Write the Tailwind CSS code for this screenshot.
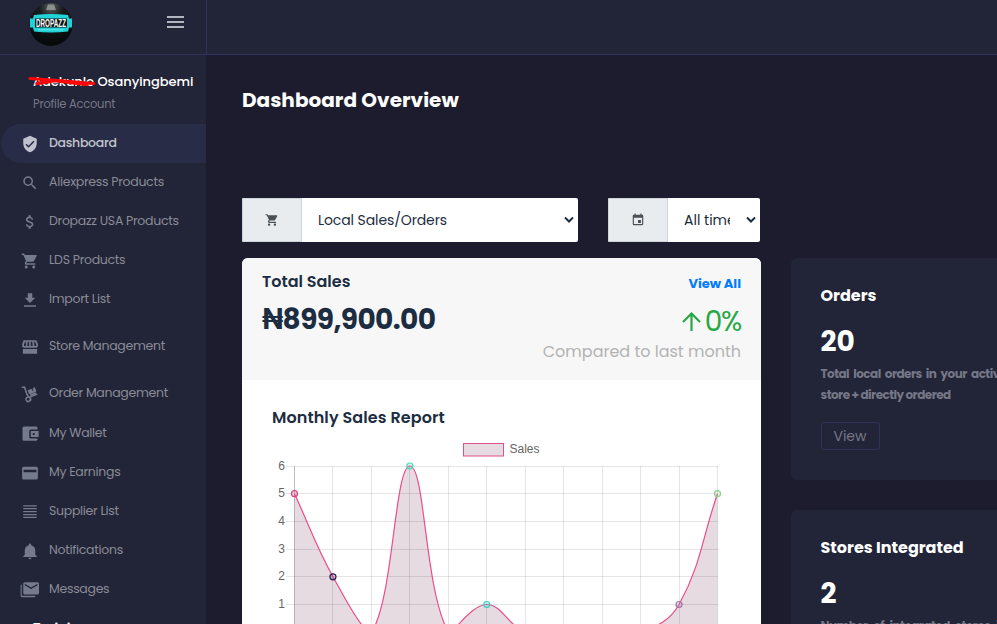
<!DOCTYPE html>
<html lang="en">
<head>
  <meta charset="UTF-8">
  <meta name="viewport" content="width=device-width, initial-scale=1.0">
  <title>Dropazz - Dashboard</title>
  <script src="https://cdn.jsdelivr.net/npm/@tailwindcss/browser@4"></script>
</head>
<body class="bg-[#1c1c2e] font-['Poppins','Inter',sans-serif] text-[#1c2d41] w-[997px] h-[624px] overflow-hidden flex flex-col">
  <header class="h-[55px] shrink-0 bg-[#222437] border-b border-[#30325a] flex">
    <div class="w-[207px] border-r border-[#30325a] flex items-start justify-between pl-[29px] pr-[22px]">
      <svg class="w-11 h-12" viewBox="0 0 44 48">
        <defs>
          <radialGradient id="ball" cx="50%" cy="10%" r="90%">
            <stop offset="0" stop-color="#5a6260"/>
            <stop offset="0.3" stop-color="#171c1c"/>
            <stop offset="1" stop-color="#050808"/>
          </radialGradient>
        </defs>
        <circle cx="22" cy="24.5" r="21.5" fill="url(#ball)"/>
        <path d="M19 4.500h6l2 5.500h-10z" fill="#8a8f8f"/>
        <path d="M5 15q17-2 34 0l1 3.500h3v9h-3l-1 4q-17 2-34 0l-1-4H1v-9h3z" fill="#21d3d6"/>
        <path d="M6 18.500h32v9H6z" fill="#0a0f10"/>
        <path d="M9 29.800h26" stroke="#8ff0f0" stroke-width="0.800" stroke-dasharray="2 0.600"/>
        <text x="22" y="26.500" text-anchor="middle" textLength="30" lengthAdjust="spacingAndGlyphs" font-family="Liberation Sans" font-weight="700" font-size="10" fill="#fff">DROPAZZ</text>
      </svg>
      <svg class="w-[17px] h-3 mt-4" viewBox="0 0 17 12" fill="#b3b5bf"><path d="M0 0h17v2H0zM0 5h17v2H0zM0 10h17v2H0z"/></svg>
    </div>
  </header>

  <div class="flex flex-1 min-h-0">
    <aside class="w-[206px] shrink-0 bg-[#222437] overflow-hidden">
      <div class="relative h-[69px] pl-[33px] pt-[17px]">
        <p class="text-[13px] leading-5 font-medium text-white whitespace-nowrap tracking-[-0.04px]">Adekunle Osanyingbemi</p>
        <p class="text-[11.5px] leading-4 mt-1 text-[#757786] tracking-[-0.25px]">Profile Account</p>
        <svg class="absolute left-[28px] top-[20px] w-[72px] h-3" viewBox="0 0 72 12" fill="none" stroke="#ff0505" stroke-linecap="round"><path d="M2 3.500l14 1 50 4" stroke-width="3"/><path d="M9 8.500l18-3 32 4" stroke-width="3.500"/></svg>
      </div>
      <nav id="menu"></nav>
      <p class="pl-[33px] pt-[9px] text-[13px] leading-5 font-semibold text-white">Training</p>
    </aside>

    <main class="flex-1 min-w-0 pl-9 pt-[33px] overflow-hidden">
      <h1 class="text-xl leading-6 font-bold text-white tracking-[0.03px]">Dashboard Overview</h1>

      <div class="flex gap-[30px] mt-[86px]">
        <div class="flex w-[336px] h-11 rounded-xs overflow-hidden bg-white">
          <div class="w-[60px] border border-[#ced4da] bg-[#e8ecef] flex items-center justify-center">
            <svg class="w-3.5 h-3.5" viewBox="0 0 24 24" fill="#495057"><path d="M7 18c-1.100 0-1.990.9-1.990 2S5.900 22 7 22s2-.9 2-2-.9-2-2-2zM1 2v2h2l3.600 7.590-1.350 2.450c-.16.28-.25.61-.25.96 0 1.100.9 2 2 2h12v-2H7.420c-.14 0-.25-.11-.25-.25l.03-.12.9-1.630h7.450c.75 0 1.410-.41 1.750-1.030l3.580-6.490A1 1 0 0 0 20 4H5.210l-.94-2H1zm16 16c-1.100 0-1.990.9-1.990 2s.89 2 1.990 2 2-.9 2-2-.9-2-2-2z"/></svg>
          </div>
          <div class="flex-1 flex items-center justify-between pl-4 pr-1 text-sm tracking-[-0.1px]">Local Sales/Orders
            <svg class="w-2.5 h-2" viewBox="0 0 10 8" fill="none" stroke="#1c2d41" stroke-width="2"><path d="M1 1.500l4 4 4-4"/></svg>
          </div>
        </div>
        <div class="flex w-[152px] h-11 rounded-xs overflow-hidden bg-white">
          <div class="w-[60px] border border-[#ced4da] bg-[#e8ecef] flex items-center justify-center">
            <svg class="w-3.5 h-3.5" viewBox="0 0 24 24" fill="#495057"><path d="M17 12h-5v5h5v-5zM16 1v2H8V1H6v2H5c-1.110 0-1.990.9-1.990 2L3 19a2 2 0 0 0 2 2h14c1.100 0 2-.9 2-2V5c0-1.100-.9-2-2-2h-1V1h-2zm3 18H5V8h14v11z"/></svg>
          </div>
          <div class="flex-1 flex items-center justify-between pl-4 pr-1 text-sm"><span class="w-[46px] overflow-hidden whitespace-nowrap">All time</span>
            <svg class="w-2.5 h-2" viewBox="0 0 10 8" fill="none" stroke="#1c2d41" stroke-width="2"><path d="M1 1.500l4 4 4-4"/></svg>
          </div>
        </div>
      </div>

      <div class="flex gap-[30px] mt-4">
        <section class="w-[519px] h-[500px] shrink-0 rounded-md bg-white overflow-hidden">
          <div class="h-[122px] bg-[#f7f7f7] px-5 pt-3.5 flex justify-between">
            <div>
              <p class="text-base leading-5 font-semibold">Total Sales</p>
              <p class="text-[28px] leading-9 font-bold mt-2.5 tracking-[-0.6px]">₦899,900.00</p>
            </div>
            <div class="flex flex-col items-end">
              <a class="text-[13px] leading-5 font-bold text-[#007bff] mt-0.5">View All</a>
              <p class="flex items-center gap-1 text-[28px] leading-9 text-[#28a745] mt-2.5 tracking-[-1.3px]">
                <svg class="w-[19px] h-5" viewBox="0 0 19 20" fill="none" stroke="#28a745" stroke-width="2.200"><path d="M9.500 19V1.500M1 10L9.500 1.500l8.500 8.500"/></svg>
                0%
              </p>
              <p class="text-base leading-6 text-[#b3b3b3]">Compared to last month</p>
            </div>
          </div>
          <h2 class="text-base leading-5 font-semibold pl-[30px] pt-7 tracking-[0.08px]">Monthly Sales Report</h2>
          <svg id="chart" class="block w-[519px] h-[220px] mt-2 font-['Liberation_Sans']" viewBox="242 436 519 220"></svg>
        </section>

        <div class="flex flex-col gap-[30px] w-[240px] shrink-0">
          <section class="h-[222px] shrink-0 rounded-md bg-[#222437] pl-[29.5px] pt-7 whitespace-nowrap text-white">
            <h2 class="text-base leading-5 font-bold">Orders</h2>
            <p class="text-[28px] leading-9 font-bold mt-[18px]">20</p>
            <p class="text-xs leading-[21px] font-bold text-[#757786] mt-[3px] tracking-[-0.55px]"><span class="[word-spacing:2.2px]">Total local orders in your active</span><br>store + directly ordered</p>
            <a class="flex items-center justify-center w-[59px] h-7 mt-[17px] rounded-[3px] border border-[#30325a] text-sm text-[#757786]">View</a>
          </section>
          <section class="h-[222px] shrink-0 rounded-md bg-[#222437] pl-[29.5px] pt-7 whitespace-nowrap text-white">
            <h2 class="text-base leading-5 font-bold">Stores Integrated</h2>
            <p class="text-[28px] leading-9 font-bold mt-[18px]">2</p>
            <p class="text-xs leading-[21px] font-bold text-[#757786] mt-[3px] tracking-[-0.55px] [word-spacing:3.5px]">Number of integrated stores in</p>
          </section>
        </div>
      </div>
    </main>
  </div>

  <script>
    const menuItems = [
      { name: "Dashboard", active: true, icon: "M12 1L3 5v6c0 5.550 3.840 10.740 9 12 5.160-1.260 9-6.450 9-12V5l-9-4zm-2 16l-4-4 1.410-1.410L10 14.170l6.590-6.590L18 9l-8 8z" },
      { name: "Aliexpress Products", icon: "M15.500 14h-.79l-.28-.27A6.470 6.470 0 0 0 16 9.500 6.500 6.500 0 1 0 9.500 16c1.610 0 3.090-.59 4.230-1.570l.27.28v.79l5 4.990L20.490 19l-4.990-5zm-6 0C7.010 14 5 11.990 5 9.500S7.010 5 9.500 5 14 7.010 14 9.500 11.990 14 9.500 14z" },
      { name: "Dropazz USA Products", icon: "M11.800 10.900c-2.270-.59-3-1.200-3-2.150 0-1.090 1.010-1.850 2.700-1.850 1.780 0 2.440.85 2.500 2.100h2.210c-.07-1.720-1.120-3.300-3.210-3.810V3h-3v2.160c-1.940.42-3.500 1.680-3.500 3.610 0 2.310 1.910 3.460 4.700 4.130 2.500.6 3 1.480 3 2.410 0 .69-.49 1.790-2.700 1.790-2.060 0-2.870-.92-2.980-2.100h-2.200c.12 2.190 1.760 3.420 3.680 3.830V21h3v-2.150c1.950-.37 3.500-1.500 3.500-3.550 0-2.840-2.430-3.810-4.700-4.400z" },
      { name: "LDS Products", icon: "M7 18c-1.100 0-1.990.9-1.990 2S5.900 22 7 22s2-.9 2-2-.9-2-2-2zM1 2v2h2l3.600 7.590-1.350 2.450c-.16.28-.25.61-.25.96 0 1.100.9 2 2 2h12v-2H7.420c-.14 0-.25-.11-.25-.25l.03-.12.9-1.630h7.450c.75 0 1.410-.41 1.750-1.030l3.580-6.490A1 1 0 0 0 20 4H5.210l-.94-2H1zm16 16c-1.100 0-1.990.9-1.990 2s.89 2 1.990 2 2-.9 2-2-.9-2-2-2z" },
      { name: "Import List", icon: "M19 9h-4V3H9v6H5l7 7 7-7zM4 19v2h16v-2H4z" },
      { name: "Store Management", gap: "mt-2", icon: "M3.500 3h17l2 5v2.500a2.500 2.500 0 0 1-2 2.300V13h-17v-.2a2.500 2.500 0 0 1-2-2.300V8zM5.500 5L4 8.500v2h2.500V5zM9 5l-.7 5.500h2.500V5zM13 5v5.500h2.600L15 5zM17.300 5l.7 5.500h2.200v-2L18.700 5zM2.500 14.500h19V21h-19z" },
      { name: "Order Management", gap: "mt-2", icon: "M1 2h4.500l3.200 9.200 2.200 4.200 10.300-4.200.8 1.800-9 3.700a4 4 0 1 1-4.600-1.400L6.700 12 4 4H1zM9.500 17a2 2 0 1 0 .01 0zM9 7l5-2 1 2.500 1.500-.6-1-2.500L18.500 3l2 5.500-8.500 3.800-1.500-.8zM12 12.800l7.500-3 1 2-8 3.200z" },
      { name: "My Wallet", gap: "mt-px", icon: "M22 18v1c0 1.100-.9 2-2 2H4a2 2 0 0 1-2-2V4a2 2 0 0 1 2-2h16c1.100 0 2 .9 2 2v2h-9a2 2 0 0 0-2 2v8a2 2 0 0 0 2 2h9zm-9-2h10.500V8H13v8zm4-2.500c-.83 0-1.500-.67-1.500-1.500s.67-1.500 1.500-1.500 1.500.67 1.500 1.500-.67 1.500-1.500 1.500z" },
      { name: "My Earnings", icon: "M20.500 3.500h-17a2 2 0 0 0-2 2v13a2 2 0 0 0 2 2h17a2 2 0 0 0 2-2v-13a2 2 0 0 0-2-2zm0 7.500h-17V7.500h17V11z" },
      { name: "Supplier List", icon: "M3 3h18v1.700H3zM3 6.700h18v1.700H3zM3 10.600h18v1.700H3zM3 14.500h18v1.700H3zM3 18.300h18V20H3z" },
      { name: "Notifications", icon: "M12 23c1.100 0 2-.9 2-2h-4a2 2 0 0 0 2 2zm7-6v-6c0-3.350-2.360-6.150-5.500-6.830V3.500a1.500 1.500 0 0 0-3 0v.67C7.360 4.850 5 7.650 5 11v6l-2 2v1h18v-1l-2-2z" },
      { name: "Messages", icon: "M1 5H-.5v14.500a2 2 0 0 0 2 2H19v-1.700H1zM5 1.500h17a2 2 0 0 1 2 2V16a2 2 0 0 1-2 2H5a2 2 0 0 1-2-2V3.500a2 2 0 0 1 2-2zm0 2.200v2l8.500 5 8.500-5v-2l-8.500 5z" }
    ];

    document.getElementById("menu").innerHTML = menuItems.map(item => `
      <a class="flex items-center h-[39px] gap-2.5 text-[12.5px] tracking-[-0.3px] whitespace-nowrap ${item.gap || ""} ${item.active ? "bg-[#292c46] rounded-l-full ml-px pl-5 font-medium text-[#c3c5cf]" : "pl-[21px] text-[#8a8c98]"}">
        <svg class="w-[18px] h-[18px] mt-px overflow-visible ${item.active ? "fill-[#bfc1cc]" : "fill-[#757a8d]"}" viewBox="0 0 24 24"><path fill-rule="evenodd" d="${item.icon}"/></svg>
        ${item.name}
      </a>`).join("");

    // Monthly sales, Jan - Dec
    const sales = [5, 2, 0, 6, 0, 1, 0, 0, 0, 0, 1, 5];
    const pointColors = ["#d8437f", "#2a1a55", "#5ab", "#3fdcb0", "#5ab", "#2fd5c0", "#5ab", "#5ab", "#5ab", "#5ab", "#9a78a8", "#8fd08f"];
    const left = 294.5, right = 717.5, top0 = 466, step = 27.7;
    const bottom = top0 + 6 * step;
    const pts = sales.map((v, i) => ({ x: left + i * (right - left) / 11, y: bottom - v * step }));
    const clamp = y => Math.max(top0, Math.min(bottom, y));

    function controls(i) {
      const p = pts[i], a = pts[i - 1] || p, b = pts[i + 1] || p;
      const d1 = Math.hypot(p.x - a.x, p.y - a.y), d2 = Math.hypot(b.x - p.x, b.y - p.y);
      const f1 = 0.4 * d1 / (d1 + d2), f2 = 0.4 * d2 / (d1 + d2);
      return {
        px: p.x - f1 * (b.x - a.x), py: clamp(p.y - f1 * (b.y - a.y)),
        nx: p.x + f2 * (b.x - a.x), ny: clamp(p.y + f2 * (b.y - a.y))
      };
    }

    let line = `M${pts[0].x} ${pts[0].y}`;
    for (let i = 1; i < pts.length; i++) {
      const c = controls(i - 1), d = controls(i);
      line += `C${c.nx} ${c.ny} ${d.px} ${d.py} ${pts[i].x} ${pts[i].y}`;
    }

    let svg = "";
    pts.forEach((p, i) => {
      const x = Math.floor(p.x) + 0.5;
      svg += `<path d="M${x} 466V${bottom + 8}" stroke="#000" stroke-opacity="${i ? 0.1 : 0.25}"/>`;
    });
    for (let v = 0; v <= 6; v++) {
      const y = Math.floor(bottom - v * step) + 0.5;
      svg += `<path d="M286 ${y}H718" stroke="#000" stroke-opacity="0.1"/>`;
      // the zero row sits below the fold
      if (v) svg += `<text x="285" y="${y + 3}" text-anchor="end" font-size="12" fill="#666">${v}</text>`;
    }
    svg += `<path d="${line}V${bottom}H${left}Z" fill="#500028" fill-opacity="0.14"/>
            <path d="${line}" fill="none" stroke="#ec4b8c" stroke-width="1.200"/>`;
    pts.forEach((p, i) => {
      svg += `<circle cx="${p.x}" cy="${p.y}" r="3" fill="${pointColors[i]}" fill-opacity="0.2" stroke="${pointColors[i]}" stroke-width="1.200"/>`;
    });
    svg += `<rect x="463.500" y="443.500" width="40" height="12.500" fill="#e5dbe0" stroke="#e0508c"/>
            <text x="509.500" y="453" font-size="12" fill="#666">Sales</text>`;
    document.getElementById("chart").innerHTML = svg;
  </script>
</body>
</html>
